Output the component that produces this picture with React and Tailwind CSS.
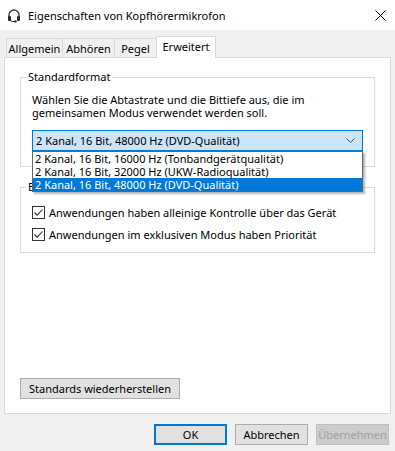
import { useState } from 'react';

function Headset() {
  return (
    <svg width="14" height="15" viewBox="0 0 14 15" className="shrink-0">
      <path d="M2 9 V7 a5 5 0 0 1 10 0 V9" fill="none" stroke="#3a3a3a" strokeWidth="1.4" />
      <rect x="1" y="8" width="3" height="5" rx="1" fill="#2b2b2b" />
      <rect x="10" y="8" width="3" height="5" rx="1" fill="#2b2b2b" />
      <path d="M3 12.5 Q5 14 8 13.5" fill="none" stroke="#2b2b2b" strokeWidth="1" />
      <circle cx="8.5" cy="13.5" r="1.2" fill="#2b2b2b" />
    </svg>
  );
}

function Checkbox({ label }) {
  return (
    <label className="flex items-center h-[22px]">
      <span className="w-[13px] h-[13px] border border-[#333] bg-white flex items-center justify-center shrink-0">
        <svg width="11" height="11" viewBox="0 0 11 11">
          <path d="M1.5 5.5 L4.2 8.2 L9.5 2.5" fill="none" stroke="#333" strokeWidth="1.1" />
        </svg>
      </span>
      <span className="ml-[4px]">{label}</span>
    </label>
  );
}

const tabs = [
  { name: 'Allgemein', w: 'w-[57px]' },
  { name: 'Abhören', w: 'w-[53px]' },
  { name: 'Pegel', w: 'w-[43px]' },
];

const formats = [
  '2 Kanal, 16 Bit, 16000 Hz (Tonbandgerätqualität)',
  '2 Kanal, 16 Bit, 32000 Hz (UKW-Radioqualität)',
  '2 Kanal, 16 Bit, 48000 Hz (DVD-Qualität)',
];

export default function App() {
  const [selected] = useState(2);

  return (
    <div
      className="w-[395px] h-[451px] bg-[#f0f0f0] flex flex-col text-[11px] text-black leading-[13px] overflow-hidden"
      style={{ fontFamily: '"Noto Sans", sans-serif' }}
    >
      {/* Title bar */}
      <div className="h-[30px] bg-white flex items-center pl-[7px] pr-[8px] shrink-0">
        <Headset />
        <span className="ml-[7px] flex-1">Eigenschaften von Kopfhörermikrofon</span>
        <svg width="11" height="11" viewBox="0 0 11 11" className="mr-[1px]">
          <path d="M0.5 0.5 L10.5 10.5 M10.5 0.5 L0.5 10.5" stroke="#000" strokeWidth="1" />
        </svg>
      </div>

      {/* Tabs */}
      <div className="flex items-end pl-[6px] h-[27px] shrink-0 relative z-10">
        {tabs.map((t) => (
          <div
            key={t.name}
            className={`h-[19px] ${t.w} border border-b-0 border-[#d9d9d9] -ml-px first:ml-0 flex items-center justify-center bg-[#f0f0f0]`}
          >
            {t.name}
          </div>
        ))}
        <div className="h-[22px] w-[60px] -ml-px border border-b-0 border-[#d9d9d9] bg-white flex items-center justify-center -mb-px pb-[3px]">
          Erweitert
        </div>
      </div>

      {/* Panel */}
      <div className="mx-[4px] h-[357px] bg-white border border-[#d9d9d9] px-[15px] pt-[11px] flex flex-col shrink-0">
        <fieldset className="border border-[#dcdcdc] h-[98px] px-[11px]">
          <legend className="px-[2px] -ml-[6px] h-[16px] leading-[16px]">Standardformat</legend>
          <p className="mt-[8px]">
            Wählen Sie die Abtastrate und die Bittiefe aus, die im
            <br />
            gemeinsamen Modus verwendet werden soll.
          </p>
          <div className="relative mt-[11px] z-20">
            <div className="h-[21px] bg-[#cce4f7] border border-[#0078d7] flex items-center pl-[3px] pr-[7px]">
              <span className="flex-1">{formats[selected]}</span>
              <svg width="9" height="5" viewBox="0 0 9 5">
                <path d="M0.5 0.5 L4.5 4.5 L8.5 0.5" fill="none" stroke="#555" strokeWidth="1" />
              </svg>
            </div>
            {/* Open list */}
            <div className="absolute left-0 right-0 top-full bg-white border border-[#646464] shadow-[2px_2px_2px_rgba(0,0,0,0.3)]">
              {formats.map((f, i) => (
                <div
                  key={f}
                  className={
                    i === selected
                      ? 'h-[13px] pl-[2px] bg-[#0078d7] text-white'
                      : 'h-[13px] pl-[2px]'
                  }
                >
                  {f}
                </div>
              ))}
            </div>
          </div>
        </fieldset>

        <fieldset className="mt-[12px] border border-[#dcdcdc] h-[74px] px-[11px] pt-[6px]">
          <legend className="px-[2px] -ml-[6px] h-[16px] leading-[16px]">Exklusiver Modus</legend>
          <Checkbox label="Anwendungen haben alleinige Kontrolle über das Gerät" />
          <Checkbox label="Anwendungen im exklusiven Modus haben Priorität" />
        </fieldset>

        <button className="mt-[125px] w-[160px] h-[21px] bg-[#e1e1e1] border border-[#adadad]">
          Standards wiederherstellen
        </button>
      </div>

      {/* Dialog buttons */}
      <div className="flex justify-end gap-[8px] pr-[6px] mt-[10px]">
        <button className="w-[73px] h-[21px] bg-[#e1e1e1] border-2 border-[#0078d7]">OK</button>
        <button className="w-[73px] h-[21px] bg-[#e1e1e1] border border-[#adadad]">Abbrechen</button>
        <button className="w-[73px] h-[21px] bg-[#cccccc] border border-[#bfbfbf] text-[#a0a0a0]">
          Übernehmen
        </button>
      </div>
    </div>
  );
}
